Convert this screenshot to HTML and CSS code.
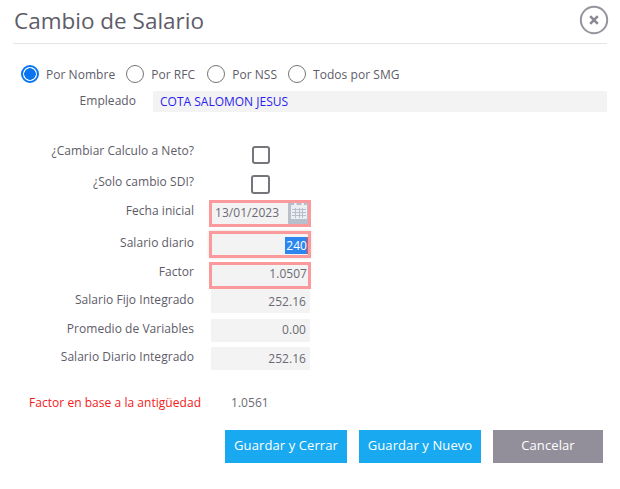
FILE: index.html
```html
<!DOCTYPE html>
<html lang="es">
<head>
<meta charset="utf-8">
<title>Cambio de Salario</title>
<link rel="stylesheet" href="styles.css">
</head>
<body>
<div class="dialog">
  <header class="head">
    <h1 class="title">Cambio de Salario</h1>
    <button class="close" type="button" aria-label="Cerrar">
      <svg width="30" height="30" viewBox="0 0 30 30"><circle cx="15" cy="15" r="13.2" fill="#fff" stroke="#97949e" stroke-width="2"/><path d="M11.2 11.2l7.6 7.600M18.8 11.2l-7.6 7.600" stroke="#8b8993" stroke-width="2.6" fill="none"/></svg>
    </button>
  </header>

  <div class="radios">
    <label class="radio"><span class="dot on"></span>Por Nombre</label>
    <label class="radio"><span class="dot"></span>Por RFC</label>
    <label class="radio"><span class="dot"></span>Por NSS</label>
    <label class="radio"><span class="dot"></span>Todos por SMG</label>
  </div>

  <div class="employee">
    <span class="emp-label">Empleado</span>
    <div class="emp-value">COTA SALOMON JESUS</div>
  </div>

  <div class="form">
    <div class="row r-check1"><span class="lbl">¿Cambiar Calculo a Neto?</span><span class="check"></span></div>
    <div class="row r-check2"><span class="lbl">¿Solo cambio SDI?</span><span class="check"></span></div>
    <div class="row r-date"><span class="lbl">Fecha inicial</span>
      <div class="field req date"><span class="date-text">13/01/2023</span>
        <span class="cal">
          <svg width="16" height="16" viewBox="0 0 16 16"><path fill="#eceef1" d="M0 2h3V0h2.500v2h5V0H13v2h3v14H0z"/><path stroke="#b8bfcc" stroke-width="1" d="M1 6.500h14M1 9.500h14M1 12.500h14M4.500 5v10M8.500 5v10M11.500 5v10"/></svg>
        </span>
      </div>
    </div>
    <div class="row r-sal"><span class="lbl">Salario diario</span>
      <div class="field req focus"><span class="sel">240</span></div>
    </div>
    <div class="row r-fac"><span class="lbl">Factor</span><div class="field req num">1.0507</div></div>
    <div class="row r-fijo"><span class="lbl">Salario Fijo Integrado</span><div class="field plain">252.16</div></div>
    <div class="row r-prom"><span class="lbl">Promedio de Variables</span><div class="field plain">0.00</div></div>
    <div class="row r-sdi"><span class="lbl">Salario Diario Integrado</span><div class="field plain">252.16</div></div>
  </div>

  <div class="antig">
    <span class="antig-lbl">Factor en base a la antigüedad</span>
    <span class="antig-val">1.0561</span>
  </div>

  <div class="actions">
    <button class="btn blue" type="button">Guardar y Cerrar</button>
    <button class="btn blue" type="button">Guardar y Nuevo</button>
    <button class="btn grey" type="button">Cancelar</button>
  </div>
</div>
</body>
</html>
```

FILE: styles.css
```css
* { box-sizing: border-box; }
html, body { margin: 0; padding: 0; background: #fff; }
body { font-family: "Open Sans", "Noto Sans", sans-serif; font-size: 12px; letter-spacing: 0.04px; color: #5e5c68; }

.dialog { width: 620px; height: 489px; padding: 0 13px; overflow: hidden; }

.head { position: relative; height: 44px; border-bottom: 1px solid #e5e5e5; width: 594px; }
.title { margin: 0; padding: 6px 0 0 1px; font-size: 22.5px; line-height: 30px; font-weight: 500; color: #5e5c68; letter-spacing: 0; }
.close { position: absolute; top: 5px; left: 566px; width: 30px; height: 30px; padding: 0; border: 0; background: none; }
.close svg { display: block; }

.radios { display: flex; margin-top: 21px; padding-left: 8px; height: 18px; align-items: center; }
.radio { display: flex; align-items: center; color: #5e5c68; font-size: 12px; margin-right: 11px; }
.radio:nth-child(2) { margin-right: 12px; }
.dot { width: 18px; height: 18px; border-radius: 50%; border: 1px solid #767676; background: #fff; margin-right: 7px; }
.dot.on { border: 2px solid #0a75f0; background: radial-gradient(circle, #0a75f0 0 5.5px, #fff 6px); }

.employee { display: flex; margin-top: 8px; height: 21px; }
.emp-label { width: 123px; text-align: right; line-height: 20px; }
.emp-value { margin-left: 17px; width: 454px; height: 21px; background: #f3f3f3; color: #2a1cf0; line-height: 21px; padding-left: 7px; letter-spacing: 0; }

.form { margin-top: 30px; }
.row { display: flex; align-items: flex-start; }
.lbl { width: 181px; text-align: right; line-height: 18px; flex: none; }

.r-check1 { height: 18px; }
.r-check2 { height: 18px; margin-top: 13px; }
.r-date { height: 27px; margin-top: 9px; }
.r-sal { height: 27px; margin-top: 4px; }
.r-fac { height: 27px; margin-top: 4px; }
.r-fijo { height: 24px; }
.r-prom { height: 23px; margin-top: 6px; }
.r-sdi { height: 23px; margin-top: 5px; }

.r-date .lbl { padding-top: 2px; }
.r-sal .lbl { padding-top: 3px; }
.r-fac .lbl { padding-top: 1px; }
.r-fijo .lbl { padding-top: 2px; }
.r-prom .lbl { padding-top: 1px; }
.r-sdi .lbl { padding-top: 1px; }

.check { width: 18px; height: 18px; margin: 4px 0 0 58px; border: 2px solid #77757c; border-radius: 3px; background: #fff; }
.r-check2 .check { margin: 2px 0 0 57px; width: 19px; height: 19px; }

.field { margin-left: 17px; width: 99px; height: 100%; background: #f3f3f3; color: #6c6a74; text-align: right; padding-right: 4px; font-size: 12px; }
.plain { line-height: 23px; }
.r-fijo .plain { line-height: 25px; }
.r-prom .plain { line-height: 21px; }
.req { margin-left: 15px; width: 102px; border: 3px solid #fb9a9c; line-height: 18px; padding-right: 1px; }
.date { display: flex; justify-content: space-between; text-align: left; padding: 0; line-height: 20px; }
.date-text { padding-left: 3px; }
.cal { display: flex; align-items: flex-start; justify-content: flex-end; width: 20px; padding: 0 1px 0 0; background: #b8bfcc; }
.focus { box-shadow: 0 0 3px #ddd; line-height: 21px; padding-right: 0; }
.sel { display: inline-block; vertical-align: middle; background: #2b86f0; color: #fff; line-height: 17px; padding: 0 0 0 1px; border-right: 1px solid #f04a4a; }

.antig { display: flex; margin-top: 24px; line-height: 18px; }
.antig-lbl { margin-left: 16px; width: 202px; color: #f21a1a; }
.antig-val { color: #6c6a74; }

.actions { display: flex; gap: 12px; margin-top: 18px; padding-left: 212px; }
.btn { height: 33px; border: 0; color: #fff; font-family: inherit; font-size: 13px; letter-spacing: 0.1px; padding: 0 0 4px; }
.blue { width: 122px; background: #19a9f1; }
.grey { width: 110px; background: #928f9b; }
```
